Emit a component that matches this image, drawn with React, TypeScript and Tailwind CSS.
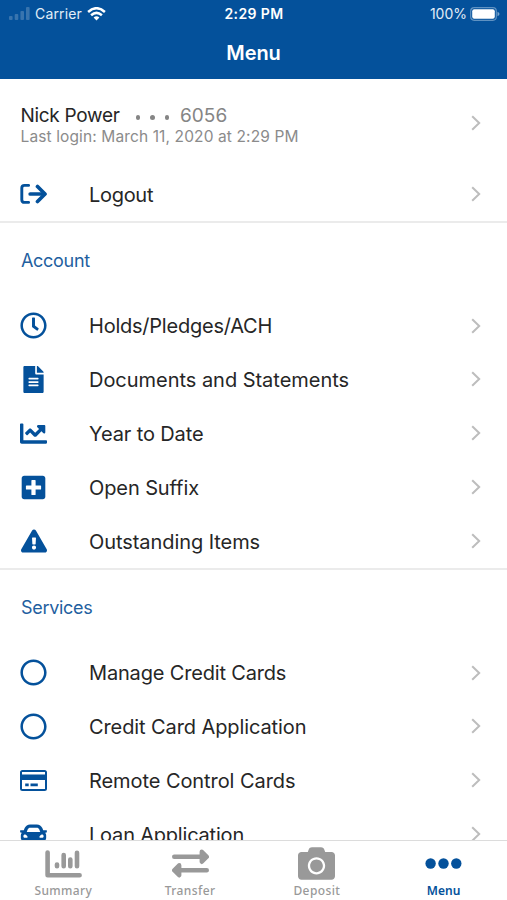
import type { ReactNode } from "react";
import {
  FaCamera,
  FaCar,
  FaChartLine,
  FaExclamationTriangle,
  FaFileAlt,
  FaPlusSquare,
  FaRegCircle,
  FaRegClock,
} from "react-icons/fa";

type Item = {
  label: string;
  icon: ReactNode;
  tracking: string;
};

const LogoutIcon = () => (
  <svg viewBox="0 0 27 22" className="w-[27px] h-[22px]" fill="none" stroke="currentColor" strokeWidth="3.7" strokeLinecap="round" strokeLinejoin="round">
    <path d="M8.6 2.4H4.5Q1.8 2.4 1.8 5.1V16.7Q1.8 19.4 4.5 19.4H8.6" strokeWidth="2.9" />
    <path d="M10.2 11H24" />
    <path d="M17.5 3.5L25 11L17.5 18.5" />
  </svg>
);

const CardIcon = () => (
  <svg viewBox="0 0 27 21" className="w-[27px] h-[21px]" fill="currentColor">
    <path
      fillRule="evenodd"
      d="M2.5 0H24.5Q27 0 27 2.5V18.5Q27 21 24.5 21H2.5Q0 21 0 18.5V2.5Q0 0 2.5 0ZM2 2V4.5H25V2ZM2 9.9V19H25V9.9ZM5.2 13.5H8.7V16.2H5.2ZM10.5 13.5H17.8V16.2H10.5Z"
    />
  </svg>
);

const SummaryIcon = () => (
  <svg viewBox="0 0 37 28" className="w-[37px] h-[28px]" fill="none" stroke="currentColor" strokeWidth="4.6" strokeLinecap="round" strokeLinejoin="round">
    <path d="M2.6 2.6V25.3H34.6" />
    <path d="M12 14.5V16.3M18.7 5V16.3M25.3 9.5V16.3M32 2.8V16.3" />
  </svg>
);

const TransferIcon = () => (
  <svg viewBox="0 0 37 29" className="w-[37px] h-[29px]" fill="currentColor" stroke="currentColor" strokeLinejoin="round">
    <path d="M2.2 7.8H29M8 21.3H34.8" strokeWidth="4.4" strokeLinecap="round" fill="none" />
    <path d="M29.8 2.8L34.8 7.8L29.8 12.8Z" strokeWidth="4.4" />
    <path d="M7.2 16.3L2.2 21.3L7.2 26.3Z" strokeWidth="4.4" />
  </svg>
);

const DotsIcon = () => (
  <svg viewBox="0 0 37 11" className="w-[37px] h-[11px]" fill="currentColor">
    <circle cx="5.6" cy="5.5" r="5.2" />
    <circle cx="18.5" cy="5.5" r="5.2" />
    <circle cx="31.3" cy="5.5" r="5.2" />
  </svg>
);

const Chevron = () => (
  <svg viewBox="0 0 10 16" className="w-[10px] h-[16px] shrink-0" fill="none" stroke="#bdbdbd" strokeWidth="2">
    <path d="M1.2 1.2L8.2 8L1.2 14.8" />
  </svg>
);

const ACCOUNT: Item[] = [
  { label: "Holds/Pledges/ACH", icon: <FaRegClock className="size-[27px]" />, tracking: "tracking-[-0.23px]" },
  { label: "Documents and Statements", icon: <FaFileAlt className="size-[27px]" />, tracking: "tracking-[-0.03px]" },
  { label: "Year to Date", icon: <FaChartLine className="size-[27px]" />, tracking: "tracking-[-0.12px]" },
  { label: "Open Suffix", icon: <FaPlusSquare className="size-[27px]" />, tracking: "tracking-[-0.1px]" },
  { label: "Outstanding Items", icon: <FaExclamationTriangle className="size-[26px]" />, tracking: "tracking-[-0.07px]" },
];

const SERVICES: Item[] = [
  { label: "Manage Credit Cards", icon: <FaRegCircle className="size-[27px]" />, tracking: "tracking-[-0.17px]" },
  { label: "Credit Card Application", icon: <FaRegCircle className="size-[27px]" />, tracking: "tracking-[-0.1px]" },
  { label: "Remote Control Cards", icon: <CardIcon />, tracking: "tracking-[-0.07px]" },
  { label: "Loan Application", icon: <FaCar className="size-[27px]" />, tracking: "tracking-[-0.2px]" },
];

const TABS = [
  { label: "Summary", icon: <SummaryIcon />, active: false },
  { label: "Transfer", icon: <TransferIcon />, active: false },
  { label: "Deposit", icon: <FaCamera className="size-[37px]" />, active: false },
  { label: "Menu", icon: <DotsIcon />, active: true },
];

function Row({ item }: { item: Item }) {
  return (
    <div className="flex items-center h-[53.8px] shrink-0 pl-[20px] pr-[26.5px]">
      <div className="w-[69px] shrink-0 text-[#04519b]">
        <div className="w-[27px] flex justify-center">{item.icon}</div>
      </div>
      <span className={`flex-1 text-[20px] leading-6 pt-[1.6px] whitespace-nowrap text-[#262626] ${item.tracking}`}>{item.label}</span>
      <Chevron />
    </div>
  );
}

function Section({ title, items }: { title: string; items: Item[] }) {
  return (
    <section className="shrink-0 border-t-2 border-[#ebebeb]">
      <h2 className="h-[76px] flex items-center text-[18px] tracking-[-0.3px] text-[#1f5f9f] pl-[21px]">{title}</h2>
      {items.map((item) => (
        <Row key={item.label} item={item} />
      ))}
    </section>
  );
}

export default function App() {
  return (
    <div className="w-full h-[900px] flex flex-col overflow-hidden bg-white font-['Inter',sans-serif]">
      <header className="h-[79px] shrink-0 bg-[#04519b] text-white">
        {/* Status bar */}
        <div className="h-[27px] grid grid-cols-3 items-center pl-[9px] pr-[7px] text-[14px] leading-none">
          <div className="flex items-center">
            <svg viewBox="0 0 21 13" className="w-[21px] h-[13px] mr-[5px]" fill="#3874ae">
              <rect x="0" y="9" width="3.6" height="4" rx="1" />
              <rect x="5.7" y="7" width="3.6" height="6" rx="1" />
              <rect x="11.4" y="4" width="3.6" height="9" rx="1" />
              <rect x="17" y="0" width="3.6" height="13" rx="1" />
            </svg>
            <span className="text-[#e2edf7] tracking-[0.15px]">Carrier</span>
            <svg viewBox="0 0 20 15" className="w-[19px] h-[14px] ml-[5px]" fill="none" stroke="white" strokeWidth="2.7">
              <path d="M1 5.3Q10 -2.7 19 5.3" />
              <path d="M4.2 8.9Q10 3.8 15.8 8.9" />
              <path d="M10 14.4L6.9 11.3Q10 8.7 13.1 11.3Z" fill="white" stroke="none" />
            </svg>
          </div>
          <span className="text-center font-semibold tracking-[0.4px] -ml-px">2:29 PM</span>
          <div className="flex items-center justify-end">
            <span className="text-[#e2edf7]">100%</span>
            <svg viewBox="0 0 30 14" className="w-[30px] h-[14px] ml-[3px]">
              <rect x="0.7" y="0.7" width="25.6" height="12.6" rx="3.5" fill="none" stroke="#5f92c2" strokeWidth="1.2" />
              <rect x="2.2" y="2.2" width="22.6" height="9.6" rx="2" fill="white" />
              <path d="M27.5 4.7Q29.5 5.4 29.5 7T27.5 9.3Z" fill="#7ba5cd" />
            </svg>
          </div>
        </div>
        <h1 className="h-[51px] flex items-center justify-center text-[20px] font-semibold tracking-[-0.1px]">Menu</h1>
      </header>

      <main className="flex-1 min-h-0 flex flex-col overflow-hidden">
        <div className="h-[88px] shrink-0 flex items-center pl-[20.5px] pr-[26.5px]">
          <div className="flex-1 pt-[6px]">
            <div className="flex items-center h-[22px] text-[19px] text-[#262626]">
              <span className="tracking-[-0.3px]">Nick Power</span>
              <span className="flex gap-[10px] ml-[16px] mr-[11px] pt-[3px]">
                <i className="size-[4.5px] rounded-full bg-[#858585]" />
                <i className="size-[4.5px] rounded-full bg-[#858585]" />
                <i className="size-[4.5px] rounded-full bg-[#858585]" />
              </span>
              <span className="text-[#858585]">6056</span>
            </div>
            <p className="text-[15.5px] leading-5 tracking-[0.12px] text-[#8b8b8b]">Last login: March 11, 2020 at 2:29 PM</p>
          </div>
          <Chevron />
        </div>
        <Row item={{ label: "Logout", icon: <LogoutIcon />, tracking: "tracking-[-0.3px]" }} />
        <Section title="Account" items={ACCOUNT} />
        <Section title="Services" items={SERVICES} />
      </main>

      <nav className="h-[60px] shrink-0 grid grid-cols-4 border-t border-[#dcdcdc] bg-white">
        {TABS.map((tab) => (
          <div key={tab.label} className={`flex flex-col items-center ${tab.active ? "text-[#04519b]" : "text-[#999999]"}`}>
            <div className="h-[42px] pt-[3px] flex items-center justify-center">{tab.icon}</div>
            <span className={`text-[12px] leading-4 font-['Noto_Sans',sans-serif] ${tab.active ? "font-semibold tracking-[0.1px]" : "font-medium tracking-[0.4px]"}`}>{tab.label}</span>
          </div>
        ))}
      </nav>
    </div>
  );
}
